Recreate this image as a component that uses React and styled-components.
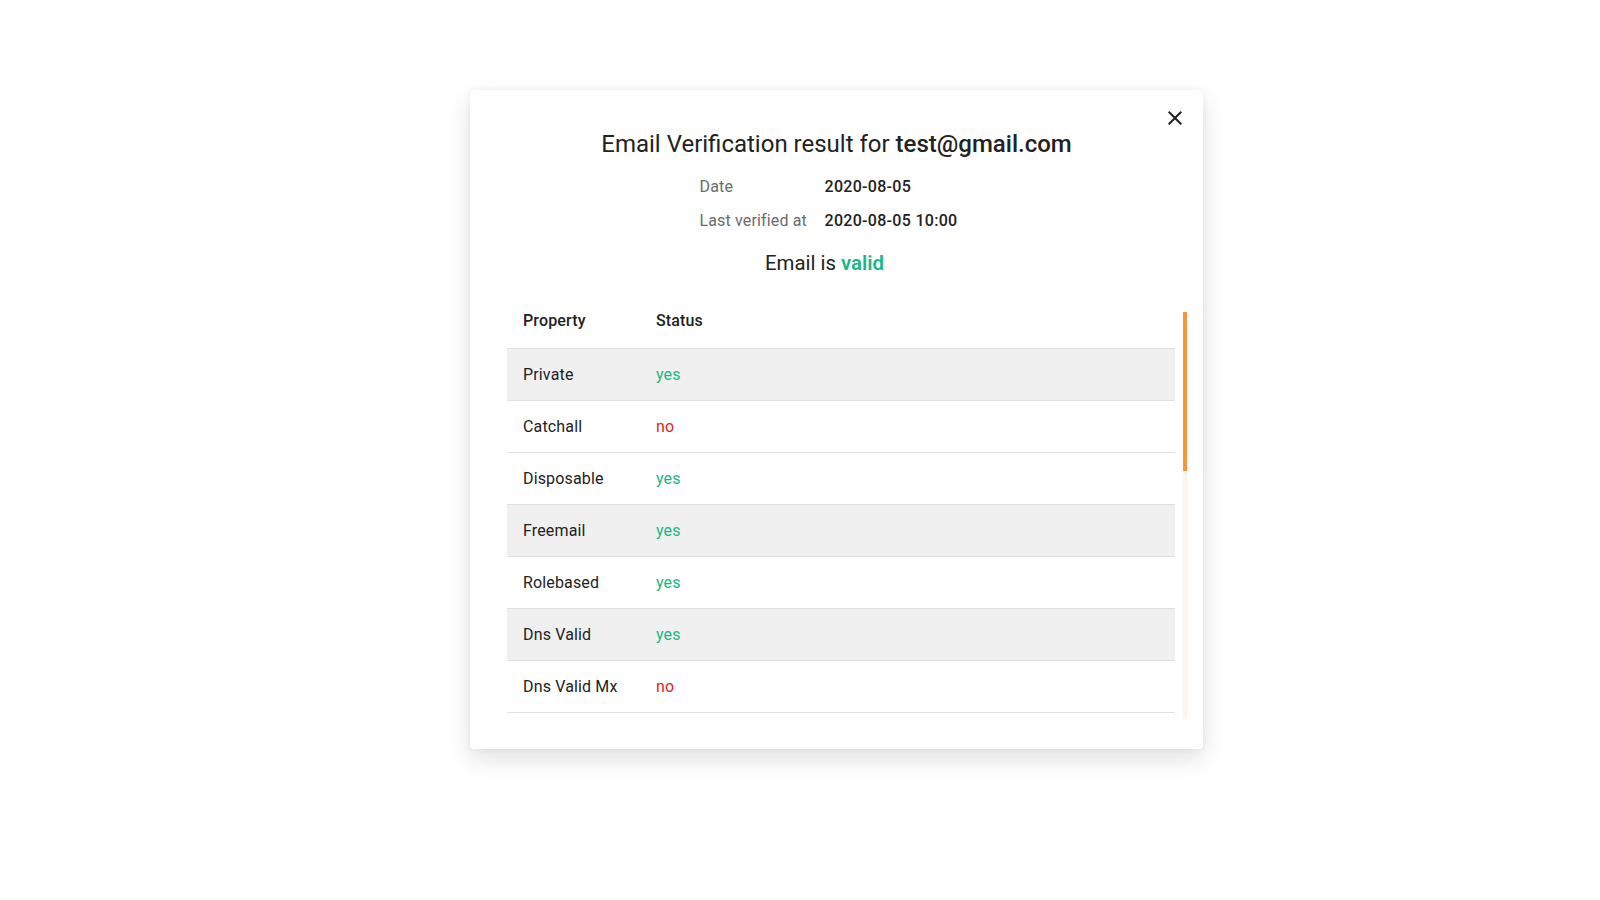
import React from "react";
import styled, { createGlobalStyle } from "styled-components";

const GlobalStyle = createGlobalStyle`
  body {
    margin: 0;
    background: #ffffff;
    font-family: Roboto, "Liberation Sans", sans-serif;
    color: #222222;
  }
`;

const Page = styled.div`
  display: flex;
  justify-content: center;
  align-items: flex-start;
  padding: 90px 0 0 73px;
  min-height: 100vh;
  box-sizing: border-box;
`;

const Modal = styled.div`
  position: relative;
  width: 733px;
  box-sizing: border-box;
  padding: 38px 0 30px;
  background: #ffffff;
  border-radius: 4px;
  box-shadow: 0 10px 24px rgba(0, 0, 0, 0.12), 0 0 6px rgba(0, 0, 0, 0.06);
  display: flex;
  flex-direction: column;
`;

const CloseButton = styled.button`
  position: absolute;
  top: 16px;
  right: 16px;
  width: 24px;
  height: 24px;
  padding: 0;
  border: none;
  background: transparent;
  color: #222222;
  cursor: pointer;
  svg {
    display: block;
  }
`;

const Title = styled.h2`
  margin: 0;
  font-size: 24px;
  line-height: 32px;
  font-weight: 400;
  text-align: center;
  color: #222222;
  b {
    font-weight: 500;
  }
`;

const Summary = styled.div`
  display: flex;
  flex-direction: column;
  align-items: center;
  padding-right: 24px;
`;

const InfoGrid = styled.div`
  display: grid;
  grid-template-columns: 125px auto;
  row-gap: 10.7px;
  margin-top: 14.7px;
  margin-left: 8px;
  font-size: 16px;
  line-height: 24px;
  letter-spacing: 0.15px;
`;

const Label = styled.span`
  color: #6b6b6b;
`;

const Value = styled.span`
  color: #222222;
  font-weight: 500;
  letter-spacing: 0.3px;
`;

const Verdict = styled.div`
  margin-top: 16px;
  font-size: 20.4px;
  line-height: 28px;
  color: #222222;
`;

const Status = styled.span`
  color: ${(p) => (p.$ok ? "#17b987" : "#e02424")};
  font-weight: ${(p) => (p.$bold ? 600 : 400)};
`;

const ScrollArea = styled.div`
  position: relative;
  margin: 17px 16px 0 37px;
  height: 425px;
  padding-right: 12px;
  overflow: hidden;
`;

const Track = styled.div`
  position: absolute;
  top: 18px;
  right: 0;
  bottom: 0;
  width: 4px;
  background: #fff3ea;
`;

const Thumb = styled.div`
  width: 100%;
  background: #f7953b;
`;

const Table = styled.table`
  width: 668px;
  border-collapse: collapse;
  font-size: 16px;
  line-height: 24px;
  letter-spacing: 0.15px;
`;

const Th = styled.th`
  height: 54px;
  padding: 0 16px;
  text-align: left;
  font-weight: 500;
  color: #222222;
  border-bottom: 1px solid #e0e0e0;
  width: ${(p) => (p.$first ? "101px" : "auto")};
`;

const Row = styled.tr`
  background: ${(p) => (p.$shaded ? "#f0f0f0" : "#ffffff")};
  border-bottom: 1px solid #e0e0e0;
`;

const Td = styled.td`
  height: 51px;
  padding: 0 16px;
  color: #222222;
`;

const rows = [
  ["Private", true, true],
  ["Catchall", false, false],
  ["Disposable", true, false],
  ["Freemail", true, true],
  ["Rolebased", true, false],
  ["Dns Valid", true, true],
  ["Dns Valid Mx", false, false],
];

const CloseIcon = () => (
  <svg width="24" height="24" viewBox="0 0 24 24" fill="currentColor">
    <path d="M19 6.41L17.59 5 12 10.59 6.41 5 5 6.41 10.59 12 5 17.59 6.41 19 12 13.41 17.59 19 19 17.59 13.41 12z" />
  </svg>
);

const App = () => {
  const thumbHeight = 159;
  return (
    <>
      <GlobalStyle />
      <Page>
        <Modal>
          <CloseButton aria-label="close">
            <CloseIcon />
          </CloseButton>
          <Title>
            Email Verification result for <b>test@gmail.com</b>
          </Title>
          <Summary>
            <InfoGrid>
              <Label>Date</Label>
              <Value>2020-08-05</Value>
              <Label>Last verified at</Label>
              <Value>2020-08-05 10:00</Value>
            </InfoGrid>
            <Verdict>
              Email is <Status $ok $bold>valid</Status>
            </Verdict>
          </Summary>
          <ScrollArea>
            <Table>
              <thead>
                <tr>
                  <Th $first>Property</Th>
                  <Th>Status</Th>
                </tr>
              </thead>
              <tbody>
                {rows.map(([name, ok, shaded]) => (
                  <Row key={name} $shaded={shaded}>
                    <Td>{name}</Td>
                    <Td>
                      <Status $ok={ok}>{ok ? "yes" : "no"}</Status>
                    </Td>
                  </Row>
                ))}
              </tbody>
            </Table>
            <Track>
              <Thumb style={{ height: thumbHeight }} />
            </Track>
          </ScrollArea>
        </Modal>
      </Page>
    </>
  );
};

export default App;
